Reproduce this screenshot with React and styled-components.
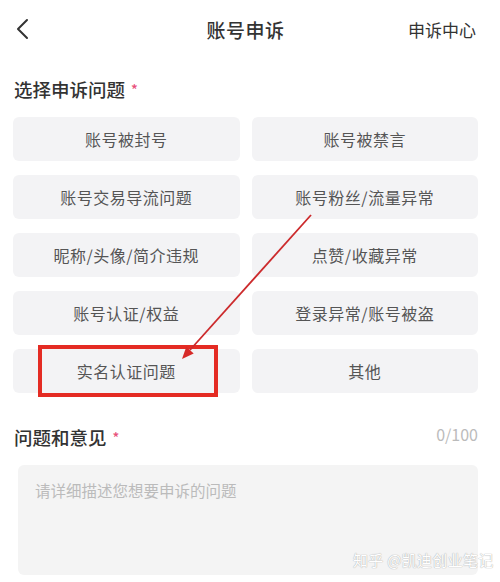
import styled, { createGlobalStyle } from 'styled-components'

const GlobalStyle = createGlobalStyle`
  body {
    margin: 0;
    background: #fff;
    font-family: "Noto Sans CJK SC", "Noto Sans", sans-serif;
  }
`

const issues = [
  '账号被封号',
  '账号被禁言',
  '账号交易导流问题',
  '账号粉丝/流量异常',
  '昵称/头像/简介违规',
  '点赞/收藏异常',
  '账号认证/权益',
  '登录异常/账号被盗',
  '实名认证问题',
  '其他',
]

export default function App() {
  return (
    <Page>
      <GlobalStyle />
      <Header>
        <BackButton>
          <svg width="14" height="22" viewBox="0 0 14 22">
            <path d="M12 2 L3 11 L12 20" fill="none" stroke="#333" strokeWidth="2" strokeLinecap="round" strokeLinejoin="round" />
          </svg>
        </BackButton>
        <Title>账号申诉</Title>
        <HeaderLink>申诉中心</HeaderLink>
      </Header>

      <SectionTitle>
        选择申诉问题<Star>*</Star>
      </SectionTitle>
      <IssueGrid>
        {issues.map((t) => (
          <IssueButton key={t}>{t}</IssueButton>
        ))}
      </IssueGrid>

      <FeedbackHead>
        <SectionTitle as="div" $flat>
          问题和意见<Star>*</Star>
        </SectionTitle>
        <Counter>0/100</Counter>
      </FeedbackHead>
      <TextBox placeholder="请详细描述您想要申诉的问题" />

      <Watermark>知乎 @凯迪创业笔记</Watermark>

      <Annotation width="500" height="582" viewBox="0 0 500 582">
        <rect x="40" y="347" width="176" height="48" fill="none" stroke="#e42b23" strokeWidth="4" />
        <line x1="311" y1="215" x2="190" y2="350" stroke="#cc2a2c" strokeWidth="1.8" />
        <polygon points="182,359 193.7,353.4 186.3,346.8" fill="#d62a28" />
      </Annotation>
    </Page>
  )
}

const Page = styled.main`
  position: relative;
  width: 500px;
  height: 582px;
  overflow: hidden;
  background: #fff;
`

const Header = styled.header`
  display: grid;
  grid-template-columns: 1fr auto 1fr;
  align-items: center;
  height: 58px;
  padding: 0 24px 0 15px;
`

const BackButton = styled.div`
  display: flex;
  align-items: center;
`

const Title = styled.h1`
  margin: 0;
  font-size: 19px;
  font-weight: 500;
  letter-spacing: 0.5px;
  color: #333;
`

const HeaderLink = styled.div`
  justify-self: end;
  font-size: 17px;
  color: #333;
`

const SectionTitle = styled.h2`
  margin: ${({ $flat }) => ($flat ? '0' : '18px 0 15px 14px')};
  font-size: 18.5px;
  line-height: 26px;
  font-weight: 500;
  color: #333;
`

const Star = styled.span`
  margin-left: 6px;
  font-size: 14px;
  color: #e8507a;
  vertical-align: 2px;
`

const IssueGrid = styled.div`
  display: grid;
  grid-template-columns: 1fr 1fr;
  gap: 14px 12px;
  padding: 0 22px 0 13px;
`

const IssueButton = styled.div`
  height: 44px;
  display: flex;
  align-items: center;
  justify-content: center;
  border-radius: 6px;
  background: #f3f3f5;
  color: #555;
  font-size: 16px;
  letter-spacing: 0.5px;
`

const FeedbackHead = styled.div`
  display: flex;
  justify-content: space-between;
  align-items: center;
  margin: 31px 22px 15px 14px;
`

const Counter = styled.span`
  font-size: 16px;
  color: #bbb;
  margin-top: -6px;
`

const TextBox = styled.textarea`
  display: block;
  box-sizing: border-box;
  width: 460px;
  height: 110px;
  margin-left: 18px;
  padding: 14px 17px;
  border: none;
  border-radius: 6px;
  background: #f4f4f4;
  resize: none;
  font-family: inherit;
  font-size: 15.5px;
  outline: none;
  &::placeholder {
    color: #bbb;
  }
`

const Watermark = styled.div`
  position: absolute;
  left: 353px;
  top: 549px;
  font-size: 15px;
  color: #fff;
  text-shadow: 0 0 1px #aaa, 0 0 1px #bbb;
  letter-spacing: 0.3px;
`

const Annotation = styled.svg`
  position: absolute;
  left: 0;
  top: 0;
  pointer-events: none;
`
